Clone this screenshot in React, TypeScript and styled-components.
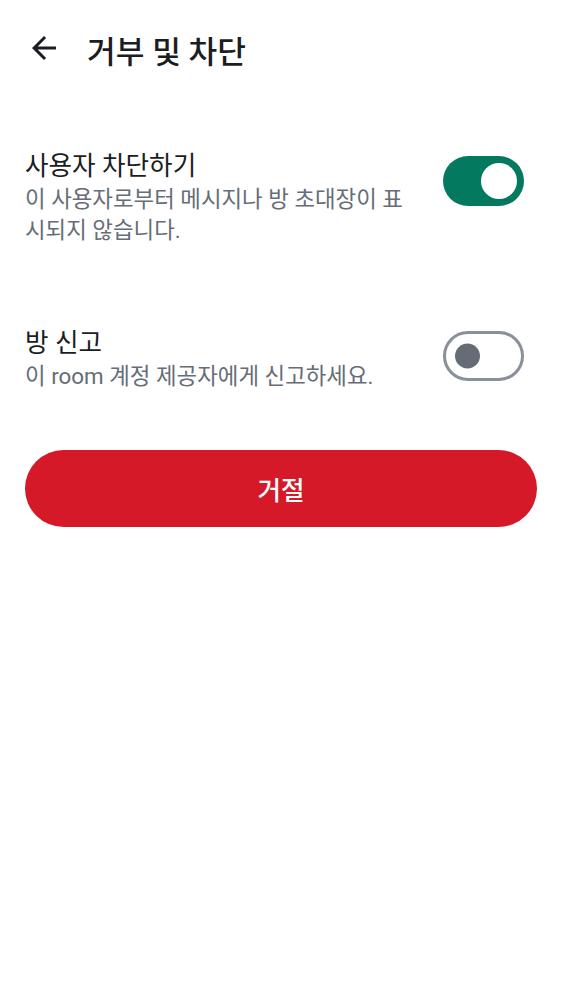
import React, { useState } from "react";
import styled, { createGlobalStyle } from "styled-components";

const FONT = `Roboto, "Noto Sans CJK KR", "Noto Sans", sans-serif`;

const GlobalStyle = createGlobalStyle`
  html, body {
    margin: 0;
    padding: 0;
    background: #ffffff;
  }
  body {
    font-family: ${FONT};
    color: #1b1d22;
  }
  * { box-sizing: border-box; }
`;

const Screen = styled.div`
  width: 562px;
  min-height: 1000px;
  background: #ffffff;
  display: flex;
  flex-direction: column;
`;

const TopBar = styled.header`
  height: 100px;
  display: flex;
  align-items: flex-start;
  padding-left: 26px;
  gap: 25px;
`;

const BackButton = styled.button`
  width: 36px;
  height: 36px;
  margin-top: 30px;
  border: none;
  background: transparent;
  padding: 0;
  display: flex;
  color: #1b1d22;
  cursor: pointer;
`;

const Title = styled.h1`
  margin: 33px 0 0;
  font-family: ${FONT};
  font-size: 31.2px;
  line-height: 40px;
  font-weight: 500;
  color: #1b1d22;
`;

const Content = styled.main`
  display: flex;
  flex-direction: column;
  padding: 0 25px;
`;

const SettingRow = styled.div<{ $top: number }>`
  display: flex;
  align-items: flex-start;
  gap: 29px;
  margin-top: ${(p) => p.$top}px;
`;

const TextBlock = styled.div`
  flex: 1;
  display: flex;
  flex-direction: column;
`;

const RowTitle = styled.div`
  font-size: 25.6px;
  line-height: 33px;
  color: #1b1d22;
`;

const RowSubtitle = styled.div`
  font-size: 22.4px;
  line-height: 30.5px;
  color: #656d77;
  margin-top: 1px;
`;

const Track = styled.button<{ $on: boolean; $offset: number }>`
  flex: 0 0 auto;
  position: relative;
  width: 81px;
  height: 50px;
  margin-top: ${(p) => p.$offset}px;
  margin-right: 13px;
  border-radius: 25px;
  padding: 0;
  cursor: pointer;
  background: ${(p) => (p.$on ? "#037a5f" : "#ffffff")};
  border: ${(p) => (p.$on ? "none" : "3px solid #8a9099")};
`;

const Thumb = styled.span<{ $on: boolean }>`
  position: absolute;
  top: 50%;
  transform: translateY(-50%);
  border-radius: 50%;
  width: ${(p) => (p.$on ? 36 : 25)}px;
  height: ${(p) => (p.$on ? 36 : 25)}px;
  background: ${(p) => (p.$on ? "#ffffff" : "#656c76")};
  ${(p) => (p.$on ? "right: 7px;" : "left: 9px;")}
`;

const DangerButton = styled.button`
  margin-top: 58px;
  height: 77px;
  width: 100%;
  border: none;
  border-radius: 39px;
  background: #d51928;
  color: #ffffff;
  font-family: ${FONT};
  font-size: 25.6px;
  font-weight: 500;
  padding: 0;
  cursor: pointer;
`;

function Toggle({
  on,
  offset,
  onChange,
}: {
  on: boolean;
  offset: number;
  onChange: () => void;
}) {
  return (
    <Track $on={on} $offset={offset} role="switch" aria-checked={on} onClick={onChange}>
      <Thumb $on={on} />
    </Track>
  );
}

function ArrowBack() {
  return (
    <svg width="36" height="36" viewBox="0 0 24 24" fill="currentColor">
      <path d="M20 11H7.83l5.59-5.59L12 4l-8 8 8 8 1.41-1.41L7.83 13H20v-2z" />
    </svg>
  );
}

export default function App() {
  const [block, setBlock] = useState(true);
  const [report, setReport] = useState(false);
  return (
    <Screen>
      <GlobalStyle />
      <TopBar>
        <BackButton aria-label="뒤로">
          <ArrowBack />
        </BackButton>
        <Title>거부 및 차단</Title>
      </TopBar>
      <Content>
        <SettingRow $top={50}>
          <TextBlock>
            <RowTitle>사용자 차단하기</RowTitle>
            <RowSubtitle>이 사용자로부터 메시지나 방 초대장이 표시되지 않습니다.</RowSubtitle>
          </TextBlock>
          <Toggle on={block} offset={6} onChange={() => setBlock(!block)} />
        </SettingRow>
        <SettingRow $top={82}>
          <TextBlock>
            <RowTitle>방 신고</RowTitle>
            <RowSubtitle>이 room 계정 제공자에게 신고하세요.</RowSubtitle>
          </TextBlock>
          <Toggle on={report} offset={4} onChange={() => setReport(!report)} />
        </SettingRow>
        <DangerButton>거절</DangerButton>
      </Content>
    </Screen>
  );
}
